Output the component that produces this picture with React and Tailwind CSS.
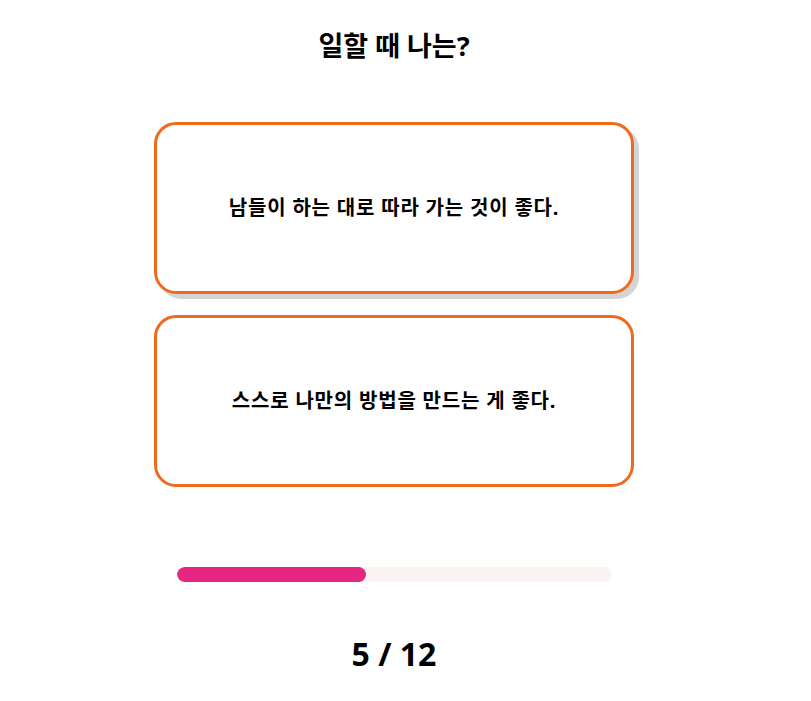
import React from 'react';

const options = [
  '남들이 하는 대로 따라 가는 것이 좋다.',
  '스스로 나만의 방법을 만드는 게 좋다.',
];

const App = () => {
  const current = 5;
  const total = 12;

  return (
    <div className="w-[788px] min-h-[701px] bg-white flex flex-col items-center font-['Noto_Sans','Noto_Sans_CJK_KR',sans-serif] text-black">
      <h1 className="mt-[27px] text-[27px] leading-[38px] font-bold">일할 때 나는?</h1>

      <div className="mt-[57px] flex flex-col gap-[21px]">
        {options.map((text, i) => (
          <button
            key={i}
            className={`w-[480px] h-[172px] rounded-[22px] border-[3px] border-[#f06a1e] bg-white flex items-center justify-center text-[20px] tracking-[0.8px] font-bold ${i === 0 ? 'shadow-[5px_5px_0_#d4d4d4]' : ''}`}
          >
            {text}
          </button>
        ))}
      </div>

      <div className="mt-[80px] w-[435px] h-[15px] rounded-full bg-[#f9f4f1] overflow-hidden">
        <div className="h-full w-[189px] rounded-full bg-[#e72682]" />
      </div>

      <div className="mt-[50px] text-[32px] leading-[44px] font-bold">
        {current} / {total}
      </div>
    </div>
  );
};

export default App;
